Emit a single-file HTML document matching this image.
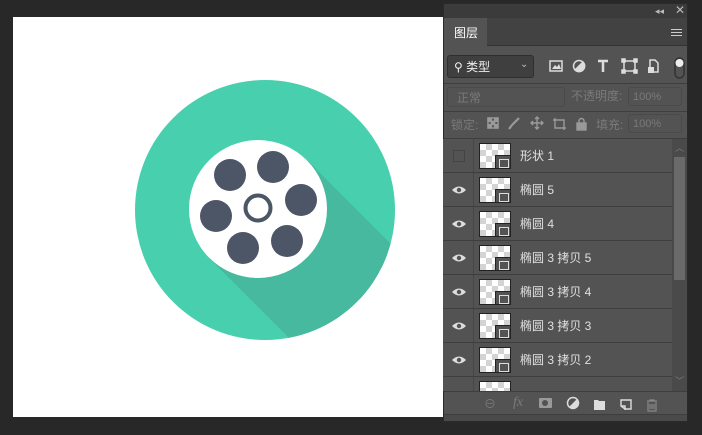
<!DOCTYPE html>
<html><head><meta charset="utf-8"><style>
*{margin:0;padding:0;box-sizing:border-box}
html,body{width:702px;height:435px;overflow:hidden}
body{background:#282828;position:relative;font-family:"Liberation Sans","Noto Sans CJK SC",sans-serif}
.a{position:absolute}
.t{color:#d6d6d6;font-size:12px;white-space:nowrap;line-height:14px}
.g{color:#7a7a7a;font-size:12px;white-space:nowrap;line-height:14px}
.row{position:absolute;left:443px;width:229px;height:34px;border-bottom:1px solid #3e3e3e;background:#535353;overflow:hidden}
.row .eye{position:absolute;left:0;top:0;width:31px;height:33px;border-right:1px solid #474747}
.thumb{position:absolute;left:36px;top:4px;width:32px;height:26px;border:1px solid #222;background-color:#fff;background-image:linear-gradient(45deg,#d4d4d4 25%,transparent 25%,transparent 75%,#d4d4d4 75%),linear-gradient(45deg,#d4d4d4 25%,transparent 25%,transparent 75%,#d4d4d4 75%);background-size:12px 12px;background-position:0 0,6px 6px}
.thumb i{position:absolute;right:0;bottom:0;width:15px;height:13px;background:#535353;border-left:1px solid #222;border-top:1px solid #222}
.thumb i:after{content:"";position:absolute;left:3px;top:3px;width:8px;height:7px;border:1px solid #ddd}
.row .n{position:absolute;left:77px;top:10px;color:#e0e0e0;font-size:12px;line-height:14px}
</style></head><body>
<div class="a" style="left:13px;top:17px;width:430px;height:400px;background:#fff"></div>
<svg class="a" style="left:0;top:0" width="443" height="435">
<defs><clipPath id="c"><circle cx="265" cy="210" r="130"/></clipPath></defs>
<circle cx="265" cy="210" r="130" fill="#48cfae"/>
<polygon clip-path="url(#c)" points="307,160 209,258 409,458 507,360" fill="#46b99f"/>
<circle cx="258" cy="209" r="69" fill="#fff"/>
<g fill="#4d5666">
<circle cx="230" cy="175" r="16"/><circle cx="273" cy="167" r="16"/><circle cx="301" cy="200" r="16"/>
<circle cx="216" cy="216" r="16"/><circle cx="243" cy="248" r="16"/><circle cx="287" cy="241" r="16"/>
</g>
<circle cx="258" cy="208" r="12.5" fill="none" stroke="#4d5666" stroke-width="4"/>
</svg>
<div class="a" style="left:443px;top:3px;width:245px;height:419px;background:#535353;border:1px solid #2a2a2a"></div>
<div class="a" style="left:444px;top:4px;width:243px;height:14px;background:#3b3b3b"></div>
<div class="a t" style="left:655px;top:4px;font-size:9px;color:#bbb">◂◂</div>
<div class="a t" style="left:675px;top:3px;font-size:12px;color:#bbb">✕</div>
<div class="a" style="left:444px;top:18px;width:243px;height:28px;background:#424242;border-bottom:1px solid #333"></div>
<div class="a" style="left:444px;top:18px;width:43px;height:29px;background:#535353"></div>
<div class="a t" style="left:454px;top:26px;color:#fff">图层</div>
<div class="a" style="left:671px;top:29px;width:11px;height:7px;border-top:1px solid #ccc;border-bottom:1px solid #ccc"><div style="margin-top:2px;height:1px;background:#ccc"></div></div>
<div class="a" style="left:447px;top:55px;width:87px;height:23px;background:#3f3f3f;border:1px solid #2e2e2e;border-radius:3px"></div>
<div class="a t" style="left:454px;top:60px;color:#eee">⚲ 类型</div>
<div class="a g" style="left:520px;top:58px;color:#bbb;font-size:10px">⌄</div>
<svg class="a" style="left:545px;top:56px" width="140" height="24" fill="none" stroke="#ddd" stroke-width="1.5">
<rect x="5" y="5" width="12" height="10"/><path d="M7 13l3-4 2 2 2-3 2 5z" fill="#ddd" stroke="none"/>
<circle cx="34" cy="10" r="5.5"/><path d="M30 14L38 6A5.5 5.5 0 0 1 30 14z" fill="#ddd"/>
<path d="M53 5h10M58 5v11" stroke-width="2.5"/>
<rect x="79" y="5" width="11" height="10"/><rect x="77" y="3" width="3" height="3" fill="#ddd"/><rect x="89" y="3" width="3" height="3" fill="#ddd"/><rect x="77" y="14" width="3" height="3" fill="#ddd"/><rect x="89" y="14" width="3" height="3" fill="#ddd"/>
<path d="M105 4h5l3 3v9h-8z"/><rect x="103" y="11" width="6" height="6" fill="#ddd" stroke="none"/>
<rect x="130" y="2" width="9" height="20" rx="4.5" stroke="#333"/><circle cx="134.5" cy="7" r="4" fill="#eee" stroke="none"/>
</svg>
<div class="a" style="left:444px;top:83px;width:243px;height:1px;background:#3e3e3e"></div>
<div class="a" style="left:447px;top:87px;width:118px;height:20px;border:1px solid #4a4a4a;border-radius:3px"></div>
<div class="a g" style="left:457px;top:91px">正常</div>
<div class="a g" style="left:571px;top:89px">不透明度:</div>
<div class="a" style="left:628px;top:87px;width:54px;height:19px;border:1px solid #4a4a4a;border-radius:3px"></div>
<div class="a g" style="left:633px;top:90px;font-size:11px">100%</div>
<div class="a" style="left:444px;top:111px;width:243px;height:1px;background:#3e3e3e"></div>
<div class="a g" style="left:451px;top:118px">锁定:</div>
<svg class="a" style="left:485px;top:114px" width="110" height="20" fill="none" stroke="#999" stroke-width="1.4">
<rect x="3" y="4" width="10" height="10"/><rect x="3" y="4" width="3.3" height="3.3" fill="#999"/><rect x="9.7" y="4" width="3.3" height="3.3" fill="#999"/><rect x="6.3" y="7.3" width="3.3" height="3.3" fill="#999"/><rect x="3" y="10.7" width="3.3" height="3.3" fill="#999"/><rect x="9.7" y="10.7" width="3.3" height="3.3" fill="#999"/>
<path d="M24 15l3-4M27 11l7-7" stroke-width="2.2"/>
<path d="M52 3v12M46 9h12M50 5l2-2 2 2M50 13l2 2 2-2M48 7l-2 2 2 2M56 7l2 2-2 2"/>
<path d="M70 4v10h11M68 6h11v10"/>
<rect x="92" y="9" width="9" height="7" fill="#999"/><path d="M94 9v-2a2.5 2.5 0 0 1 5 0v2"/>
</svg>
<div class="a g" style="left:596px;top:118px">填充:</div>
<div class="a" style="left:628px;top:114px;width:54px;height:19px;border:1px solid #4a4a4a;border-radius:3px"></div>
<div class="a g" style="left:633px;top:117px;font-size:11px">100%</div>
<div class="a" style="left:444px;top:138px;width:243px;height:1px;background:#3e3e3e"></div>
<div class="row" style="top:139px"><div class="eye"><div style="position:absolute;left:10px;top:11px;width:12px;height:12px;border:1px solid #444"></div></div><div class="thumb"><i></i></div><div class="n">形状 1</div></div>
<div class="row" style="top:173px"><div class="eye"><svg width="31" height="33"><path d="M9 17q7-7 14 0q-7 7-14 0z" fill="#ddd"/><circle cx="16" cy="17" r="2.2" fill="#535353"/></svg></div><div class="thumb"><i></i></div><div class="n">椭圆 5</div></div>
<div class="row" style="top:207px"><div class="eye"><svg width="31" height="33"><path d="M9 17q7-7 14 0q-7 7-14 0z" fill="#ddd"/><circle cx="16" cy="17" r="2.2" fill="#535353"/></svg></div><div class="thumb"><i></i></div><div class="n">椭圆 4</div></div>
<div class="row" style="top:241px"><div class="eye"><svg width="31" height="33"><path d="M9 17q7-7 14 0q-7 7-14 0z" fill="#ddd"/><circle cx="16" cy="17" r="2.2" fill="#535353"/></svg></div><div class="thumb"><i></i></div><div class="n">椭圆 3 拷贝 5</div></div>
<div class="row" style="top:275px"><div class="eye"><svg width="31" height="33"><path d="M9 17q7-7 14 0q-7 7-14 0z" fill="#ddd"/><circle cx="16" cy="17" r="2.2" fill="#535353"/></svg></div><div class="thumb"><i></i></div><div class="n">椭圆 3 拷贝 4</div></div>
<div class="row" style="top:309px"><div class="eye"><svg width="31" height="33"><path d="M9 17q7-7 14 0q-7 7-14 0z" fill="#ddd"/><circle cx="16" cy="17" r="2.2" fill="#535353"/></svg></div><div class="thumb"><i></i></div><div class="n">椭圆 3 拷贝 3</div></div>
<div class="row" style="top:343px"><div class="eye"><svg width="31" height="33"><path d="M9 17q7-7 14 0q-7 7-14 0z" fill="#ddd"/><circle cx="16" cy="17" r="2.2" fill="#535353"/></svg></div><div class="thumb"><i></i></div><div class="n">椭圆 3 拷贝 2</div></div>
<div class="row" style="top:377px;height:14px;border:none"><div class="eye"></div><div class="thumb"><i></i></div></div>
<div class="a" style="left:672px;top:139px;width:15px;height:252px;background:#4a4a4a"></div>
<div class="a" style="left:674px;top:157px;width:11px;height:123px;background:#6a6a6a"></div>
<div class="a g" style="left:675px;top:141px;font-size:9px">︿</div>
<div class="a g" style="left:675px;top:374px;font-size:9px">﹀</div>
<div class="a" style="left:444px;top:391px;width:243px;height:1px;background:#3e3e3e"></div>
<div class="a g" style="left:484px;top:397px;font-size:12px">⊖</div>
<div class="a g" style="left:513px;top:396px;font-style:italic;font-family:'Liberation Serif',serif;font-size:14px">fx</div>
<div class="a" style="left:539px;top:398px;width:13px;height:10px;background:#9a9a9a;border-radius:1px"><div style="margin:2px 3px;width:6px;height:6px;border-radius:50%;background:#535353"></div></div>
<svg class="a" style="left:565px;top:396px" width="110" height="16">
<circle cx="8" cy="7" r="5.5" fill="none" stroke="#ddd" stroke-width="1.5"/><path d="M4 11L12 3A5.5 5.5 0 0 1 4 11z" fill="#ddd"/>
<path d="M29 4h4l1 1h6v9h-11z" fill="#ddd"/>
<path d="M56 4h10v9h-6l-4-3zM56 10h4v4" fill="none" stroke="#ddd" stroke-width="1.4"/>
<path d="M82 5h10M85 5v-1h4v1M83 6v9h8v-9M85 8v5M87 8v5M89 8v5" fill="none" stroke="#888" stroke-width="1.2"/>
</svg>
<div class="a" style="left:444px;top:414px;width:243px;height:1px;background:#3e3e3e"></div>
<div class="a" style="left:444px;top:415px;width:243px;height:6px;background:#4a4a4a"></div>
</body></html>
